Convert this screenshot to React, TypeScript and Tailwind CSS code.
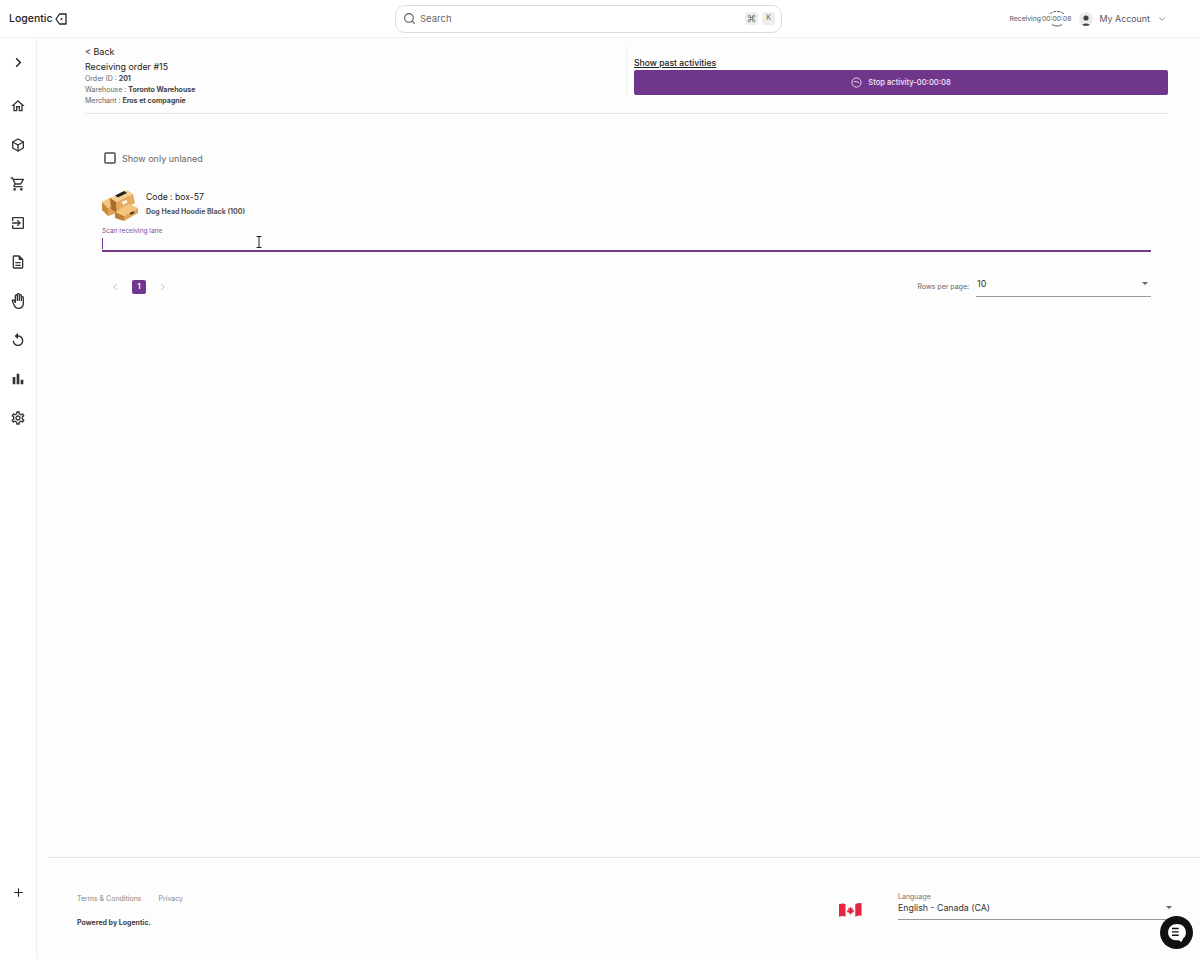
import { ChevronRight, ChevronLeft, ChevronDown, Plus, Search, Command } from 'lucide-react';
import { MdOutlineHome, MdOutlineShoppingCart, MdOutlineExitToApp, MdOutlineDescription, MdOutlineBackHand, MdReplay, MdBarChart, MdOutlineSettings } from 'react-icons/md';
import { TbBox } from 'react-icons/tb';

const navIcons = [MdOutlineHome, TbBox, MdOutlineShoppingCart, MdOutlineExitToApp, MdOutlineDescription, MdOutlineBackHand, MdReplay, MdBarChart, MdOutlineSettings];

function LogoMark() {
  return (
    <svg width="12" height="12" viewBox="0 0 12 12" fill="none" stroke="#222" strokeWidth="1.3" className="ml-[2px]">
      <path d="M4.5 1H11V11H4.5L1 6Z" strokeLinejoin="round" />
      <circle cx="6.5" cy="6" r="1" fill="#222" stroke="none" />
    </svg>
  );
}

function Boxes() {
  return (
    <svg width="36" height="32" viewBox="0 0 36 32">
      {/* left box */}
      <path d="M0 13L9 8L15 13L6 19Z" fill="#f3c57f" />
      <path d="M0 13L6 19V27L0 21Z" fill="#c98a3c" />
      <path d="M6 19L15 13V24L6 27Z" fill="#dfa355" />
      {/* top box */}
      <path d="M8 9L25 1L31 5L14 13Z" fill="#f6cf90" />
      <path d="M13 6.5L22 2L25 4L16 8.5Z" fill="#2a2420" />
      <path d="M8 9L14 13L15 24L9 20Z" fill="#a96c28" />
      <path d="M14 13L31 5L33 14L15 24Z" fill="#e5ac60" />
      {/* front box */}
      <path d="M13 23L27 15L36 19L22 27Z" fill="#f3c57f" />
      <path d="M13 23L22 27V32L13 29Z" fill="#bd7f35" />
      <path d="M22 27L36 19V24L22 32Z" fill="#dfa355" />
      <rect x="20" y="12" width="5" height="3" fill="#fff4df" transform="rotate(-25 22 13)" />
      <rect x="28" y="23" width="4" height="2" fill="#3a2c1c" transform="rotate(-28 30 24)" />
    </svg>
  );
}

function CanadaFlag() {
  return (
    <svg width="23" height="16" viewBox="0 0 24 16">
      <path d="M0 2C3 1 5 1 7 2V15C5 14 3 14 0 15Z" fill="#e8233f" />
      <path d="M7 2C10 3 14 3 17 2V15C14 16 10 16 7 15Z" fill="#fbfbfb" />
      <path d="M17 2C19 1 21 0.5 23.5 1V14C21 13.5 19 14 17 15Z" fill="#e8233f" />
      <path d="M12 4.5L13 6.5L14.5 6L14 8.5L15.8 8L15.3 10L13 11V12.5H11V11L8.7 10L8.2 8L10 8.5L9.5 6L11 6.5Z" fill="#e8233f" />
    </svg>
  );
}

export default function App() {
  return (
    <div className="relative h-screen overflow-hidden bg-white font-['Inter',sans-serif] text-[#222]">
      {/* Top bar */}
      <header className="flex h-[38px] items-center border-b border-[#f0f0f0] bg-white pl-[9px] pr-[33px]">
        <div className="flex w-[386px] items-center">
          <span className="mt-px text-[10.5px] font-medium text-[#1d1d1d]">Logentic</span>
          <LogoMark />
        </div>
        <div className="flex h-[28px] w-[387px] items-center rounded-[10px] border border-[#dcdcdc] bg-white pl-[7px] pr-[6px]">
          <Search className="h-[13px] w-[13px] text-[#555]" />
          <span className="ml-[4px] mt-px flex-1 text-[9.5px] text-[#666]">Search</span>
          <span className="flex h-[13px] w-[13px] items-center justify-center rounded-[2px] bg-[#eeeeee]">
            <Command className="h-[9px] w-[9px] text-[#666]" />
          </span>
          <span className="ml-[4px] flex h-[13px] w-[13px] items-center justify-center rounded-[2px] bg-[#eeeeee] text-[7px] text-[#666]">K</span>
        </div>
        <div className="ml-auto flex items-center">
          <span className="mt-px text-[6.8px] text-[#555]">Receiving</span>
          <span className="relative ml-[1px] mt-px text-[6.8px] text-[#555]">
            00:00:08
            <svg width="22" height="20" viewBox="0 0 22 20" fill="none" stroke="#444" strokeWidth="0.9" className="absolute left-[4px] top-[-5px]">
              <path d="M4 5C7 1.5 15 1.5 18 5" strokeDasharray="3 1" />
              <path d="M6 15.5C9 17.5 13 17.5 16 15.5" />
            </svg>
          </span>
          <span className="ml-[8px] flex h-[14px] w-[14px] items-end justify-center overflow-hidden rounded-full bg-[#ececec]">
            <svg width="12" height="12" viewBox="0 0 12 12" fill="#444">
              <circle cx="6" cy="4" r="2.6" />
              <path d="M1.5 12C1.5 8.5 10.5 8.5 10.5 12Z" />
            </svg>
          </span>
          <span className="ml-[6px] text-[8.9px] text-[#555]">My Account</span>
          <ChevronDown className="ml-[7px] h-[10px] w-[10px] text-[#777]" />
        </div>
      </header>

      <div className="flex h-[921px]">
        {/* Sidebar */}
        <aside className="flex w-[37px] flex-col items-center border-r border-[#efefef] bg-white">
          <ChevronRight className="mt-[17px] h-[15px] w-[15px] text-[#222]" strokeWidth={2.4} />
          <nav className="mt-[28px] flex flex-col items-center gap-[23px]">
            {navIcons.map((Icon, i) => (
              <Icon key={i} className="h-[16px] w-[16px] text-[#333]" />
            ))}
          </nav>
          <Plus className="mt-auto mb-[60px] h-[13px] w-[13px] text-[#222]" strokeWidth={2} />
        </aside>

        {/* Main column */}
        <main className="flex flex-1 flex-col bg-[#fdfdfd]">
          <div className="flex-1 pl-[48px] pr-[32px]">
            <div className="flex h-[76px] border-b border-[#e6e6e6] pt-[7px]">
              <div className="w-[541px]">
                <div className="flex items-center text-[9px] leading-[13px] text-[#222]">&lt; Back</div>
                <div className="mt-[2px] text-[8.9px] leading-[13px] text-[#222]">Receiving order #15</div>
                <p className="text-[7px] leading-[11px] text-[#666]">Order ID : <b className="font-bold text-[#444]">201</b></p>
                <p className="text-[7px] leading-[11px] text-[#666]">Warehouse : <b className="font-bold text-[#444]">Toronto Warehouse</b></p>
                <p className="text-[7px] leading-[11px] text-[#666]">Merchant : <b className="font-bold text-[#444]">Eros et compagnie</b></p>
              </div>
              <div className="mb-[18px] flex-1 border-l border-[#f0f0f0] pl-[7px] pt-[13px]">
                <div className="text-[8.6px] font-medium leading-[11px] text-[#222] underline">Show past activities</div>
                <button className="mt-[1px] flex h-[25px] w-full items-center justify-center rounded-[2px] bg-[#6f368c] text-[7.6px] font-medium text-[#f3eaf6]">
                  <svg width="11" height="11" viewBox="0 0 11 11" fill="none" stroke="currentColor" strokeWidth="0.9" className="mr-[6px]">
                    <circle cx="5.5" cy="5.5" r="4.6" />
                    <path d="M2.8 5C4 3.8 6.5 4.6 8.2 6" />
                  </svg>
                  Stop activity-00:00:08
                </button>
              </div>
            </div>

            <div className="pl-[17px] pr-[17px]">
              <label className="mt-[38px] flex items-center">
                <span className="-mt-[2px] ml-[2px] h-[12px] w-[12px] rounded-[2px] border-2 border-[#777] bg-white" />
                <span className="ml-[6px] text-[9px] text-[#666]">Show only unlaned</span>
              </label>

              <div className="mt-[23px] flex items-center">
                <Boxes />
                <div className="-mt-px ml-[8px]">
                  <div className="text-[8.6px] leading-[13px] text-[#222]">Code : box-57</div>
                  <div className="mt-[3px] text-[7px] font-bold leading-[10px] text-[#555]">Dog Head Hoodie Black (100)</div>
                </div>
              </div>

              <div className="relative mt-[6px] h-[25px] border-b-2 border-[#6f368c]">
                <div className="text-[6.5px] leading-[9px] text-[#7f4a9b]">Scan receiving lane</div>
                <div className="mt-[2px] h-[11px] w-px bg-[#6f368c]" />
                {/* mouse cursor from the recording */}
                <svg width="6" height="12" viewBox="0 0 6 12" fill="none" stroke="#222" strokeWidth="1" className="absolute left-[154px] top-[9px]">
                  <path d="M0.5 0.5H5.5M3 0.5V11.5M0.5 11.5H5.5" />
                </svg>
              </div>

              <div className="mt-[26px] flex items-center">
                <ChevronLeft className="ml-[8px] h-[10px] w-[10px] text-[#aaa]" />
                <span className="ml-[12px] flex h-[14px] w-[14px] items-center justify-center rounded-[2px] bg-[#6f368c] text-[7px] font-bold text-white">1</span>
                <ChevronRight className="ml-[12px] h-[10px] w-[10px] text-[#aaa]" />
                <span className="ml-auto text-[7px] text-[#666]">Rows per page:</span>
                <div className="ml-[7px] flex h-[19px] w-[175px] items-center justify-between border-b border-[#999] pb-[6px] pl-[1px] pr-[3px] text-[9px] text-[#333]">
                  10
                  <span className="h-0 w-0 border-x-[3.5px] border-t-[3.5px] border-x-transparent border-t-[#666]" />
                </div>
              </div>
            </div>
          </div>

          {/* Footer */}
          <footer className="ml-[11px] flex h-[102px] items-start border-t border-[#e2e2e2] pl-[29px] pr-[27px]">
            <div className="mt-[36px]">
              <div className="flex text-[7px] text-[#888]">
                <span>Terms &amp; Conditions</span>
                <span className="ml-[17px]">Privacy</span>
              </div>
              <div className="mt-[13px] text-[7px] font-bold text-[#444]">Powered by Logentic.</div>
            </div>
            <div className="ml-auto mt-[44px]">
              <CanadaFlag />
            </div>
            <div className="ml-[36px] mt-[34px] w-[275px] border-b border-[#999] pb-[5px]">
              <div className="text-[7px] leading-[9px] text-[#777]">Language</div>
              <div className="flex items-center justify-between pr-[1px] text-[8.8px] text-[#333]">
                English - Canada (CA)
                <span className="h-0 w-0 border-x-[3.5px] border-t-[3.5px] border-x-transparent border-t-[#666]" />
              </div>
            </div>
          </footer>
        </main>
      </div>

      {/* Chat bubble */}
      <div className="absolute left-[1160px] top-[916px] flex h-[33px] w-[33px] items-center justify-center rounded-full bg-[#111]">
        <svg width="20" height="20" viewBox="0 0 18 18">
          <path d="M9 1C13.5 1 17 4 17 8.5C17 11 16 13 14.5 14L13 17L10.5 15.5H9C4.5 15.5 1 13 1 8.5C1 4 4.5 1 9 1Z" fill="#fff" />
          <path d="M4.5 5H10.5M4.5 8H10.5M4.5 11H10.5" stroke="#111" strokeWidth="1.3" />
        </svg>
      </div>
    </div>
  );
}
